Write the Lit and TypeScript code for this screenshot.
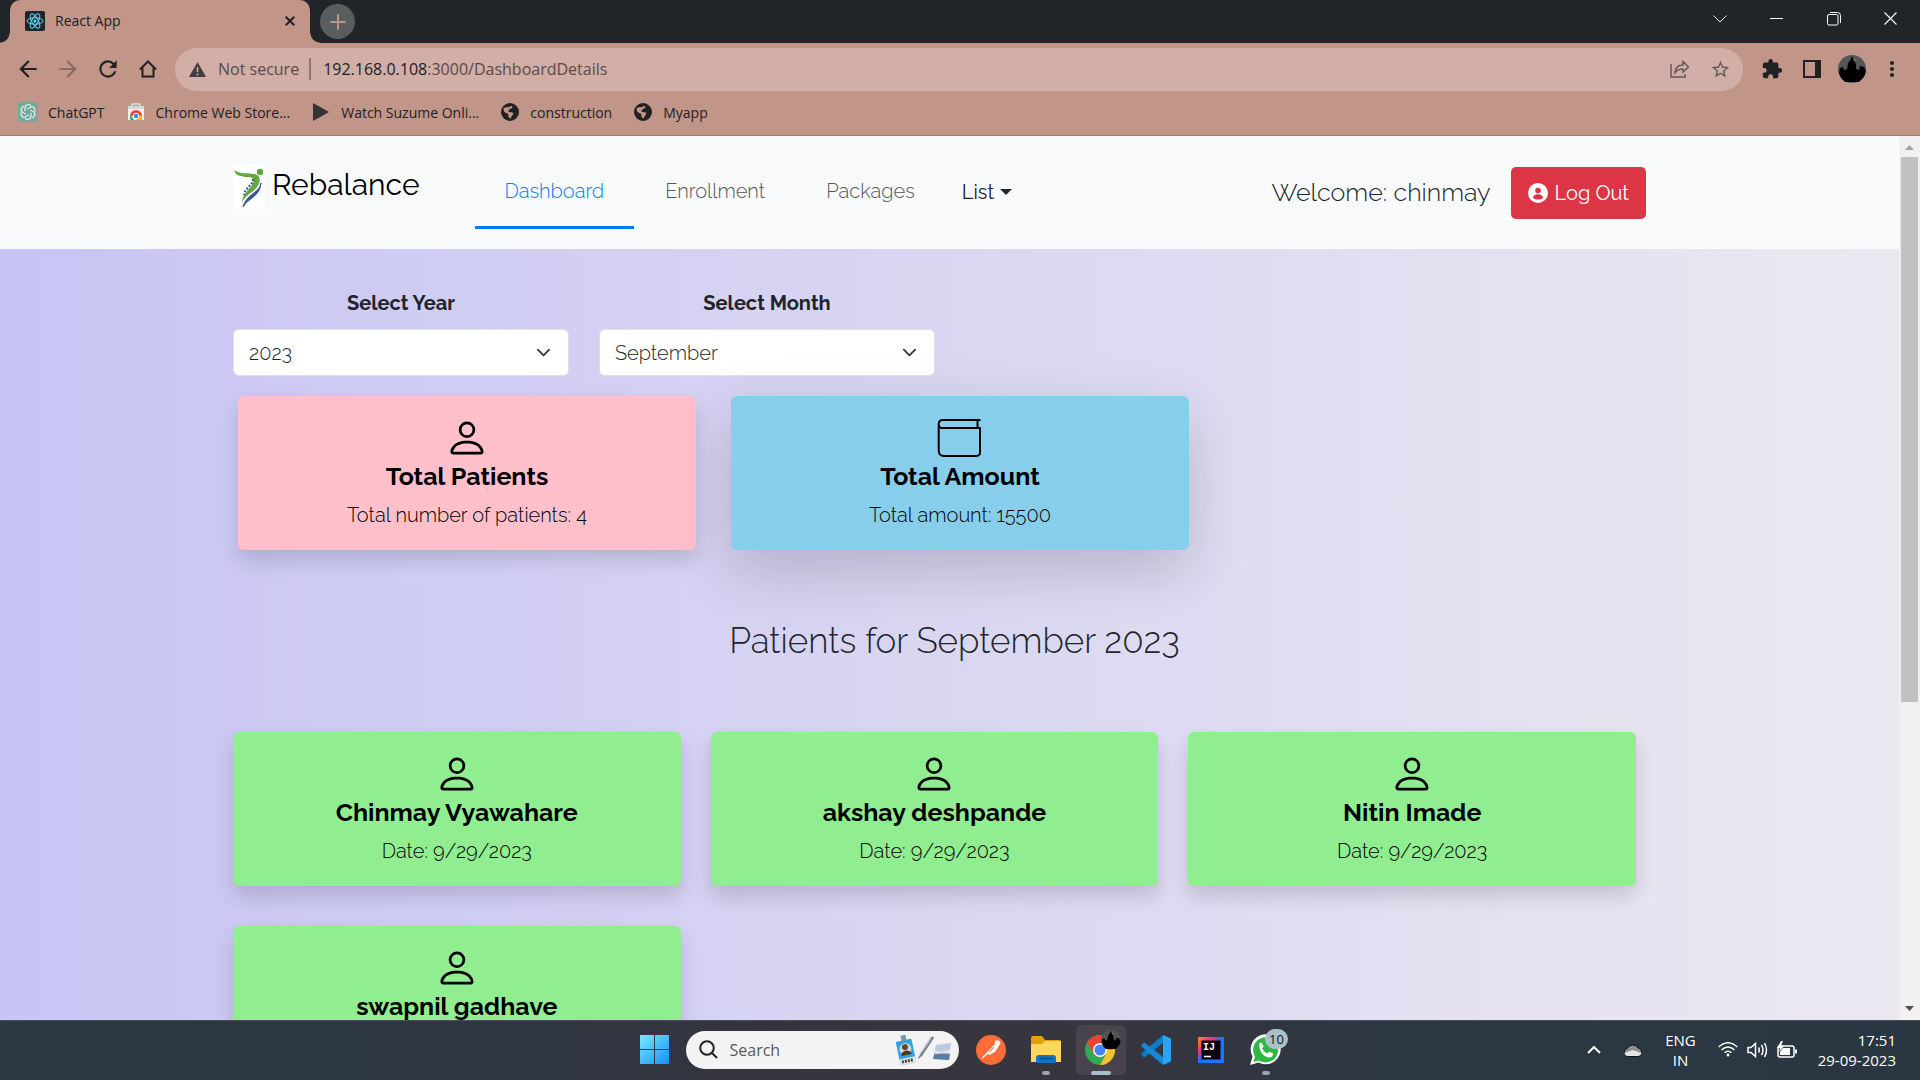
import { LitElement, html, css, svg, nothing } from "lit";
import { customElement, property } from "lit/decorators.js";

const person = html`<svg class="ico" viewBox="0 0 16 16" fill="currentColor" aria-hidden="true"><path d="M8 8a3 3 0 1 0 0-6 3 3 0 0 0 0 6zm2-3a2 2 0 1 1-4 0 2 2 0 0 1 4 0zm4 8c0 1-1 1-1 1H3s-1 0-1-1 1-4 6-4 6 3 6 4zm-1-.004c-.001-.246-.154-.986-.832-1.664C11.516 10.68 10.289 10 8 10c-2.290 0-3.516.68-4.168 1.332-.678.678-.83 1.418-.832 1.664h10z"/></svg>`;

const wallet = html`<svg class="ico" viewBox="-1 -1 44 44" fill="none" stroke="#000" stroke-width="2" aria-hidden="true"><path d="M41.500 3H4Q-.3 3-.3 7V33.500Q-.3 39 5 39H36Q41 39 41 36V11H3Q-.3 11-.3 7M38.500 3V11"/></svg>`;

const globe = html`<svg class="fav" viewBox="0 0 20 20" aria-hidden="true"><circle cx="10" cy="10" r="9" fill="#202124"/><path d="M3.500 6.500c2-2.500 4.500-.5 6.500-2s3 .5 2 1.500-3.500 1-3.500 3 3.500.5 4.500 2-1.500 2.500-2 4.500-2 .5-2.500-1 .5-2.500-1-3-4-1-4-5z" fill="#c29589"/></svg>`;

const knot = [0, 60, 120, 180, 240, 300];
const castle = svg`<circle cx="14" cy="14" r="14" fill="#555"/><path d="M1 18l1-5 3-1 1 3 3-1 1-6 2-2 2-5 2 5 2 3v5l3 1 1-4 4 1 2 4a14 14 0 0 1-3 7l-4 4H7l-4-4z" fill="#000"/><path d="M16 4l1 2" stroke="#b5a800"/><path d="M23 5l2 2" stroke="#b03040"/>`;

@customElement("info-card")
export class InfoCard extends LitElement {
  @property() heading = "";
  @property() note = "";
  @property() icon = "person";
  @property({ reflect: true }) tone = "green";

  static styles = css`
    :host {
      display: flex;
      flex-direction: column;
      align-items: center;
      box-sizing: border-box;
      height: 154px;
      padding: 20px;
      border-radius: 6px;
      background: lightgreen;
      color: #000;
      box-shadow: 0 10px 20px rgba(0, 0, 0, 0.15);
    }
    :host([tone="pink"]) { background: pink; }
    :host([tone="blue"]) { background: skyblue; box-shadow: 0 20px 60px rgba(0, 0, 0, 0.175); }
    .ico { display: block; flex: none; width: 44px; height: 44px; overflow: visible; }
    .title { margin: 0 0 8px; font-size: 25px; line-height: 32px; font-weight: 700; white-space: nowrap; }
    .note { margin: 0; font-size: 20px; line-height: 30px; font-weight: 300; white-space: nowrap; }
  `;

  render() {
    return html`${this.icon === "wallet" ? wallet : person}
      <h5 class="title">${this.heading}</h5>
      <p class="note">${this.note}</p>`;
  }
}

@customElement("app-root")
export class AppRoot extends LitElement {
  static styles = css`
    :host {
      display: flex;
      flex-direction: column;
      height: 100vh;
      overflow: hidden;
      color: #212529;
      font-family: Raleway, Lato, "Open Sans", sans-serif;
    }
    * { box-sizing: border-box; }
    button { border: 0; padding: 0; background: none; font: inherit; color: inherit; display: inline-flex; align-items: center; justify-content: center; }
    a { color: inherit; text-decoration: none; }
    svg { display: block; flex: none; }
    .ui { font-family: "Segoe UI", "Open Sans", sans-serif; font-size: 14px; color: #202124; }
    .grow { flex: 1; }

    .strip { display: flex; height: 43px; background: #212529; padding: 0 1px 0 10px; flex: none; }
    .tab { display: flex; align-items: center; width: 300px; padding: 0 15px 2px; gap: 10px; background: #c29589; border-radius: 10px 10px 0 0; position: relative; }
    .tab::before, .tab::after { content: ""; position: absolute; bottom: 0; width: 10px; height: 10px; }
    .tab::before { left: -10px; background: radial-gradient(circle at 0 0, transparent 9px, #c29589 10px); }
    .tab::after { right: -10px; background: radial-gradient(circle at 100% 0, transparent 9px, #c29589 10px); }
    .tab .name { flex: 1; }
    .plus { width: 35px; height: 35px; border-radius: 50%; background: #585d60; margin: 4px 0 0 10px; }
    .win { width: 57px; height: 37px; color: #fff; }

    .bar { display: flex; align-items: center; height: 54px; background: #c29589; padding: 0 8px 2px; flex: none; }
    .nav { width: 40px; height: 40px; }
    .omni { display: flex; align-items: center; flex: 1; height: 43px; border-radius: 22px; background: #d1aea6; margin: 0 9px 0 7px; padding: 0 3px 0 14px; font-size: 16px; }
    .omni .secure { color: #5a4a48; padding: 0 10px 0 12px; border-right: 2px solid #8f7672; line-height: 22px; margin-right: 12px; }
    .omni .addr { color: #5a4a48; }
    .omni b { color: #202124; font-weight: 400; }
    .tool { width: 40px; height: 40px; }
    .marks { display: flex; align-items: center; gap: 21px; height: 39px; padding: 0 18px 8px; background: #c29589; border-bottom: 1px solid #a67d72; flex: none; }
    .mark { display: flex; align-items: center; gap: 10px; }
    .fav { width: 20px; height: 20px; }

    .view { display: flex; flex: 1; min-height: 0; }
    .page { flex: 1; overflow: hidden; background: linear-gradient(to right, #c8c4f4, #ebe9f0); }
    .head { height: 113px; background: #f8fafc; display: flex; align-items: center; padding: 0 253px 0 233px; }
    .brand { display: flex; align-items: center; gap: 7px; font-size: 30px; color: #000; margin-right: 55px; padding-bottom: 12px; }
    .pic { background: #fff; width: 32px; height: 45px; }
    .brand .word { line-height: 40px; padding-bottom: 4px; }
    .links { display: flex; align-self: stretch; align-items: center; gap: 1px; font-size: 20px; font-weight: 300; color: #555; }
    .link { height: 73px; line-height: 70px; padding: 0 30px; border-bottom: 3px solid transparent; }
    .link.on { color: #007bff; border-color: #007bff; }
    .list { font-size: 20px; font-weight: 400; gap: 6px; margin-left: 16px; padding-bottom: 2px; color: #212529; }
    .hello { font-size: 25px; font-weight: 300; margin-right: 20px; padding-bottom: 2px; }
    .logout { height: 52px; padding: 0 17px; gap: 7px; border-radius: 5px; background: #dc3545; color: #fff; font-size: 20px; }

    .body { padding: 40px 223px 0 233px; }
    .filters { display: grid; grid-template-columns: 336px 336px; gap: 30px; }
    .field { display: flex; flex-direction: column; text-align: center; font-size: 20px; font-weight: 700; line-height: 28px; gap: 12px; }
    .pick { display: grid; }
    .pick > * { grid-area: 1 / 1; }
    .pick svg { justify-self: end; align-self: center; margin-right: 18px; pointer-events: none; }
    select { appearance: none; height: 47px; border: 1px solid #dee2e6; border-radius: 6px; background: #fff; padding: 0 15px; font: 300 20px/30px Raleway, Lato, "Open Sans", sans-serif; color: #212529; }
    .totals { display: grid; grid-template-columns: 458px 458px; gap: 35px; margin: 20px 0 0 5px; }
    .when { margin: 70px 0; font-size: 35px; line-height: 42px; font-weight: 300; text-align: center; }
    .people { display: grid; grid-template-columns: repeat(3, 1fr); column-gap: 30px; row-gap: 40px; padding-right: 40px; }
    .scroll { width: 21px; background: #f1f1f1; display: flex; flex-direction: column; align-items: center; padding: 9px 0; }
    .thumb { width: 17px; height: 545px; background: #c1c1c1; margin-top: 7px; }

    .task { height: 60px; flex: none; padding-bottom: 2px; color: #fff; border-top: 1px solid #4a5058; background: linear-gradient(to right, #2b3742 0, #2d3641 25%, #38343e 45%, #36363f 58%, #2b3742 75%, #2a3641 100%); display: grid; grid-template-columns: 1fr auto 1fr; align-items: center; }
    .apps { display: flex; align-items: center; grid-column: 2; padding-left: 15px; }
    .find { display: flex; align-items: center; gap: 12px; width: 273px; height: 38px; border-radius: 19px; background: #f3f3f3; padding: 0 7px 0 13px; margin: 0 7px 0 17px; }
    .find input { flex: 1; min-width: 0; border: 0; background: none; outline: none; font: 16px "Segoe UI", "Open Sans", sans-serif; color: #555; padding: 0; }
    .find input::placeholder { color: #5a5a5a; opacity: 1; }
    .app { width: 50px; height: 50px; margin-right: 5px; border-radius: 5px; position: relative; }
    .app.live { background: #48434d; }
    .app.open::after { content: ""; position: absolute; bottom: 0; left: 21px; width: 8px; height: 4px; border-radius: 2px; background: #a0a0a6; }
    .app.live::after { left: 15px; width: 20px; background: #a9c1ca; }
    .tray { display: flex; align-items: center; justify-content: flex-end; padding-right: 24px; font-size: 15px; line-height: 20px; color: #fff; }
    .cloud { margin-left: 22px; }
    .lang { text-align: center; margin: 0 22px; }
    .net { gap: 9px; }
    .clock { text-align: right; margin-left: 20px; }
  `;

  private field(id: string, label: string, value: string) {
    return html`<div class="field">
      <label for=${id}>${label}</label>
      <div class="pick">
        <select id=${id}><option>${value}</option></select>
        <svg width="15" height="15" viewBox="0 0 16 16" fill="none" stroke="#343a40" stroke-width="2" stroke-linecap="round" stroke-linejoin="round"><path d="m2 5 6 6 6-6"/></svg>
      </div>
    </div>`;
  }

  private mark(icon: unknown, text: string) {
    return html`<a class="mark" href="#">${icon}<span>${text}</span></a>`;
  }

  private app(label: string, kind: string, icon: unknown) {
    return html`<button class="app ${kind}" aria-label=${label}>${icon ?? nothing}</button>`;
  }

  render() {
    return html`
      <div class="strip ui">
        <div class="tab">
          <svg class="fav" viewBox="0 0 20 20"><rect width="20" height="20" rx="2" fill="#212529"/><g fill="none" stroke="#61dafb"><ellipse cx="10" cy="10" rx="8" ry="3.200"/><ellipse cx="10" cy="10" rx="8" ry="3.200" transform="rotate(60 10 10)"/><ellipse cx="10" cy="10" rx="8" ry="3.200" transform="rotate(120 10 10)"/></g><circle cx="10" cy="10" r="1.600" fill="#61dafb"/></svg>
          <span class="name">React App</span>
          <button aria-label="Close tab"><svg width="10" height="10" viewBox="0 0 10 10" stroke="#202124" stroke-width="2"><path d="M.7.700l8.600 8.600M9.300.700L.7 9.300"/></svg></button>
        </div>
        <button class="plus" aria-label="New tab"><svg width="16" height="16" viewBox="0 0 16 16" stroke="#c29589" stroke-width="2"><path d="M8 .5v15M.5 8h15"/></svg></button>
        <span class="grow"></span>
        <button class="win" aria-label="Search tabs"><svg width="14" height="14" viewBox="0 0 14 14" fill="none" stroke="#fff"><path d="M.5 3.500l6.500 6.500 6.500-6.500"/></svg></button>
        <button class="win" aria-label="Minimize"><svg width="13" height="13" stroke="#fff"><path d="M0 6.500h13"/></svg></button>
        <button class="win" aria-label="Restore"><svg width="14" height="14" viewBox="0 0 14 14" fill="none" stroke="#fff"><rect x=".5" y="2.500" width="10.500" height="10.500" rx="1.500"/><path d="M3 .5h7.500q3 0 3 3V11"/></svg></button>
        <button class="win" aria-label="Close"><svg width="13" height="13" stroke="#fff" stroke-width="1.200"><path d="M.5.500l12 12M12.500.500l-12 12"/></svg></button>
      </div>

      <div class="bar ui">
        <button class="nav" aria-label="Back"><svg width="26" height="26" viewBox="0 0 24 24" fill="#202124"><path d="M20 11H7.830l5.590-5.590L12 4l-8 8 8 8 1.410-1.410L7.830 13H20v-2z"/></svg></button>
        <button class="nav" aria-label="Forward"><svg width="26" height="26" viewBox="0 0 24 24" fill="#8a6b64"><path d="M12 4l-1.410 1.410L16.170 11H4v2h12.170l-5.580 5.590L12 20l8-8z"/></svg></button>
        <button class="nav" aria-label="Reload"><svg width="26" height="26" viewBox="0 0 24 24" fill="#202124"><path d="M17.650 6.350A7.958 7.958 0 0 0 12 4a8 8 0 1 0 7.730 10h-2.080A6 6 0 1 1 12 6c1.660 0 3.140.690 4.220 1.780L13 11h7V4l-2.350 2.350z"/></svg></button>
        <button class="nav" aria-label="Home"><svg width="20" height="20" viewBox="0 0 20 20" fill="none" stroke="#202124" stroke-width="2"><path d="M4.500 9v8.500h11V9M2 10.500L10 2.500l8 8" /></svg></button>
        <div class="omni">
          <svg width="17" height="15" viewBox="0 0 17 15"><path d="M8.500 0L17 15H0z" fill="#443a3f"/><path d="M8.500 5v5M8.500 11.500v2" stroke="#d1aea6" stroke-width="1.600"/></svg>
          <span class="secure">Not secure</span>
          <span class="addr"><b>192.168.0.108</b>:3000/DashboardDetails</span>
          <span class="grow"></span>
          <button class="tool" aria-label="Share"><svg width="20" height="18" viewBox="0 0 20 18" fill="none" stroke="#66585a" stroke-width="1.500"><path d="M1 4v13h14v-3M5 12.500c.5-5 3.500-7.500 8-7.500V1.500L18.500 7 13 12V9c-4 0-6 1-8 3.500z"/></svg></button>
          <button class="tool" aria-label="Bookmark"><svg width="21" height="21" viewBox="0 0 24 24" fill="#66585a"><path d="M22 9.240l-7.190-.62L12 2 9.190 8.630 2 9.240l5.460 4.730L5.820 21 12 17.270 18.180 21l-1.630-7.030L22 9.240zM12 15.400l-3.760 2.270 1-4.280-3.320-2.880 4.380-.38L12 6.100l1.710 4.040 4.380.380-3.320 2.880 1 4.280L12 15.400z"/></svg></button>
        </div>
        <button class="tool" aria-label="Extensions"><svg width="22" height="22" viewBox="0 0 24 24" fill="#202124"><path d="M20.500 11H19V7a2 2 0 0 0-2-2h-4V3.500a2.500 2.500 0 0 0-5 0V5H4a2 2 0 0 0-2 2v3.800h1.500a2.700 2.700 0 0 1 0 5.400H2V20a2 2 0 0 0 2 2h3.800v-1.500a2.700 2.700 0 0 1 5.400 0V22H17a2 2 0 0 0 2-2v-4h1.500a2.500 2.500 0 0 0 0-5z"/></svg></button>
        <button class="tool" aria-label="Side panel"><svg width="18" height="18"><rect x="1" y="1" width="16" height="16" fill="none" stroke="#202124" stroke-width="2"/><path d="M12 0h6v18h-6z" fill="#202124"/></svg></button>
        <button class="tool" aria-label="Profile"><svg width="28" height="28" viewBox="0 0 28 28">${castle}</svg></button>
        <button class="tool" aria-label="Menu"><svg width="4" height="18" fill="#202124"><circle cx="2" cy="3" r="2"/><circle cx="2" cy="9" r="2"/><circle cx="2" cy="15" r="2"/></svg></button>
      </div>

      <nav class="marks ui">
        ${this.mark(html`<svg class="fav" viewBox="0 0 20 20"><rect width="20" height="20" rx="3" fill="#74aa9c"/><g fill="none" stroke="#fff">${knot.map((a) => svg`<path d="M7 9V6q0-3.500 3.200-3.500 2 0 3 1.500" transform=${`rotate(${a} 10 10)`}/>`)}</g></svg>`, "ChatGPT")}
        ${this.mark(html`<svg class="fav" viewBox="0 0 20 20"><path d="M6 4V2h8v2" fill="none" stroke="#ddd" stroke-width="1.500"/><path d="M2 4h16v14H2z" fill="#f1f1f1"/><path d="M2 4h16v3H2z" fill="#d5d9dc"/><path d="M4 14a6 6 0 0 1 12 0z" fill="#ea4335"/><path d="M4 12.500L8 18H4.500q-1-3-.5-5.500z" fill="#34a853"/><path d="M16 13.500v4.500h-6l3-4.500z" fill="#fbbc04"/><circle cx="10" cy="14" r="2.800" fill="#4285f4" stroke="#fff"/></svg>`, "Chrome Web Store...")}
        ${this.mark(html`<svg class="fav" viewBox="0 0 20 20"><path d="M2 1l16 9-16 9z" fill="#333"/></svg>`, "Watch Suzume Onli...")}
        ${this.mark(globe, "construction")}
        ${this.mark(globe, "Myapp")}
      </nav>

      <div class="view">
        <div class="page">
          <header class="head">
            <a class="brand" href="#">
              <svg class="pic" viewBox="0 0 32 45"><circle cx="27" cy="8" r="3.200" fill="#63a83f"/><path d="M1 6c5 4 14 3 20 4 7 1 7 7 3 13-4 6-11 7-15 16 0-9 6-12 10-18 3-5 2-8-4-8-7 0-13-2-14-7z" fill="#63a83f"/><path d="M28 19c-1 10-15 11-18 24 5-9 17-10 18-24z" fill="#39569b" stroke="#39569b"/><path d="M20 15c0 7-8 8-9 16" fill="none" stroke="#39569b" stroke-width="2" stroke-dasharray="2 1.500"/></svg>
              <span class="word">Rebalance</span>
            </a>
            <nav class="links">
              <a class="link on" href="#">Dashboard</a>
              <a class="link" href="#">Enrollment</a>
              <a class="link" href="#">Packages</a>
              <button class="list">List<svg width="12" height="6"><path d="M0 0h12L6 6z" fill="#212529"/></svg></button>
            </nav>
            <span class="grow"></span>
            <span class="hello">Welcome: chinmay</span>
            <button class="logout"><svg width="20" height="20" viewBox="0 0 20 20"><circle cx="10" cy="10" r="10" fill="#fff"/><circle cx="10" cy="7.500" r="2.800" fill="#dc3545"/><path d="M5 15c0-5 10-5 10 0-3 2-7 2-10 0z" fill="#dc3545"/></svg>Log Out</button>
          </header>
          <main class="body">
            <div class="filters">
              ${this.field("year", "Select Year", "2023")}
              ${this.field("month", "Select Month", "September")}
            </div>
            <div class="totals">
              <info-card tone="pink" heading="Total Patients" note="Total number of patients: 4"></info-card>
              <info-card tone="blue" icon="wallet" heading="Total Amount" note="Total amount: 15500"></info-card>
            </div>
            <h2 class="when">Patients for September 2023</h2>
            <div class="people">
              ${["Chinmay Vyawahare", "akshay deshpande", "Nitin Imade", "swapnil gadhave"].map(
                (n) => html`<info-card heading=${n} note="Date: 9/29/2023"></info-card>`
              )}
            </div>
          </main>
        </div>
        <div class="scroll">
          <svg width="9" height="5"><path d="M0 5h9L4.500 0z" fill="#a3a3a3"/></svg>
          <div class="thumb"></div>
          <span class="grow"></span>
          <svg width="9" height="5"><path d="M0 0h9L4.500 5z" fill="#505050"/></svg>
        </div>
      </div>

      <footer class="task ui">
        <div class="apps">
          <button aria-label="Start"><svg width="29" height="29" viewBox="0 0 29 29"><defs><linearGradient id="w" gradientUnits="userSpaceOnUse" x1="0" y1="0" x2="29" y2="29"><stop stop-color="#7be8ff"/><stop offset="1" stop-color="#1293f5"/></linearGradient></defs><path d="M0 0h14v14H0zM15 0h14v14H15zM0 15h14v14H0zM15 15h14v14H15z" fill="url(#w)"/></svg></button>
          <label class="find">
            <svg width="19" height="19" viewBox="0 0 19 19" fill="none" stroke="#222" stroke-width="2"><circle cx="8" cy="8" r="6.800"/><path d="M13 13l5 5"/></svg>
            <input placeholder="Search" aria-label="Search" />
            <svg width="56" height="32" viewBox="0 0 56 32"><g transform="rotate(-12 10 18)"><rect x="2" y="6" width="16" height="24" rx="1" fill="#2ea5e0"/><rect x="2" y="24" width="16" height="6" fill="#e8e8e8"/><circle cx="10" cy="15" r="6" fill="#c9d6dd"/><circle cx="10" cy="13" r="3" fill="#6a4630"/><path d="M5 19q5-5 10 0v2H5z" fill="#4b3427"/><path d="M4 27h12" stroke="#444" stroke-width="3" stroke-dasharray="2 1"/><path d="M8 1h5v6H8z" fill="#7199ac"/></g><path d="M40 11l15-2-2 17-16-1z" fill="#b7cbe3"/><path d="M39 18l8 1 7 1-1 6-16-1z" fill="#5c7ca8"/><path d="M39 16l6 2 9-2v3l-15 1z" fill="#efe3dc"/><path d="M22 24L34 4q3-3 4 0L26 22l-4 3z" fill="#777c80"/><path d="M24 20L35 4" stroke="#c4c8ca" stroke-width="1.500"/></svg>
          </label>
          ${this.app("Postman", "", html`<svg width="30" height="30" viewBox="0 0 30 30"><circle cx="15" cy="15" r="15" fill="#ff6c37"/><path d="M6.500 23l8-8.500M11 18.500l8-8.500 3 1-3 5-5 3z" fill="#fff" stroke="#fff" stroke-width="1.300"/><circle cx="21.500" cy="8" r="2.800" fill="#fff"/><path d="M13 17l5-5" stroke="#ff6c37"/></svg>`)}
          ${this.app("Files", "open", html`<svg width="30" height="27" viewBox="0 0 30 27"><path d="M0 2q0-2 2-2h9l3 4h14q2 0 2 2v8H0z" fill="#e3a008"/><path d="M0 8h11l3-3h16v21H0z" fill="#ffd75e"/><path d="M5 27v-5q0-3 3-3h14q3 0 3 3v5z" fill="#1173c4"/><path d="M9 22.500h12" stroke="#0a4a86" stroke-width="1.500"/></svg>`)}
          ${this.app("Chrome", "open live", html`<svg width="40" height="40" viewBox="-4 0 40 40"><circle cx="15" cy="20" r="15" fill="#34a853"/><path d="M2 12.500a15 15 0 0 1 26 0L15 20l-5 6z" fill="#ea4335"/><path d="M15 13.500h13.600A15 15 0 0 1 15 35l6.500-11.500z" fill="#fbc02d"/><circle cx="15" cy="20" r="7" fill="#fff"/><circle cx="15" cy="20" r="5.500" fill="#4285f4"/><g transform="translate(16) scale(.7)">${castle}</g></svg>`)}
          ${this.app("Code", "", html`<svg width="30" height="30" viewBox="0 0 30 30"><path d="M22 0l8 3.500v23L22 30z" fill="#2aa5f3"/><path d="M22 0v8L4 22l-1 .5-3-3 .5-1z" fill="#0a7ccc"/><path d="M22 30v-8L4 8l-1-.5-3 3 .5 1z" fill="#1489d8"/></svg>`)}
          ${this.app("IDE", "", html`<svg width="26" height="26" viewBox="0 0 26 26"><defs><linearGradient id="j" x1="0" y1="0" x2="1" y2="1"><stop stop-color="#ff8a1e"/><stop offset=".3" stop-color="#f0317f"/><stop offset=".5" stop-color="#087cfa"/><stop offset="1" stop-color="#2a6fff"/></linearGradient></defs><path d="M0 0h26v26H0z" fill="url(#j)"/><path d="M3.500 3.500h19v19h-19z" fill="#0a0008"/><text x="5" y="13" font-family="Liberation Mono" font-weight="700" font-size="10" fill="#fff">IJ</text><path d="M6 19.500h7" stroke="#fff" stroke-width="1.500"/></svg>`)}
          ${this.app("WhatsApp", "open", html`<svg width="44" height="42" viewBox="-6 0 44 42"><path d="M0 36l2.500-8.500a15 15 0 1 1 6 6z" fill="#fff"/><path d="M3.500 33l1.500-5.500a12.500 12.500 0 1 1 4 4z" fill="#2fb843"/><path d="M9 15q2-3 3.500 0l1 2.500-1.500 2q2 3.500 5.500 5l2-2 3.500 2q0 4-4.500 4-9-2-9.500-13.500z" fill="#fff"/><rect x="15" y="0" width="23" height="20" rx="10" fill="#a9c1ca"/><text x="26.500" y="15" text-anchor="middle" font-family="Open Sans" font-size="13" fill="#111">10</text></svg>`)}
        </div>
        <div class="tray">
          <svg width="14" height="8" fill="none" stroke="#fff" stroke-width="2"><path d="M1 7l6-6 6 6"/></svg>
          <svg class="cloud" width="20" height="14" viewBox="0 0 20 14"><path d="M5 13.500a4.200 4.200 0 0 1-.5-8.300A6 6 0 0 1 15 5a4.300 4.300 0 0 1 0 8.500z" fill="#8d8d8d" stroke="#111"/><path d="M1.500 10l8-3 9 3q-1 3-4 3H5q-3 0-3.500-3z" fill="#e3e3e3"/></svg>
          <div class="lang">ENG<br />IN</div>
          <button class="net" aria-label="Network, sound and battery">
            <svg width="20" height="15" viewBox="0 0 20 15" fill="none" stroke="#fff" stroke-width="1.500"><path d="M.7 5q9.300-8.500 18.600 0M3.500 8q6.500-6 13 0M6.500 10.800q3.500-3 7 0"/><circle cx="10" cy="13" r="1.500" fill="#fff" stroke="none"/></svg>
            <svg width="21" height="18" viewBox="0 0 21 18" fill="none" stroke="#fff" stroke-width="1.500"><path d="M1 6.500h3l4.500-4v13L4 11.500H1zM11.500 6.500q1.500 2.500 0 5M14.500 4q3 5 0 10M17.500 2q4 7 0 14"/></svg>
            <svg width="21" height="17" viewBox="0 0 21 17"><rect x="1" y="5" width="16" height="11" rx="2" fill="none" stroke="#fff" stroke-width="1.500"/><path d="M6 7h7v7H3v-3zM18 8.500h2v4h-2zM4 0L0 7h3l-1 4 5-6H4l2-5z" fill="#fff"/></svg>
          </button>
          <div class="clock">17:51<br />29-09-2023</div>
        </div>
      </footer>
    `;
  }
}
